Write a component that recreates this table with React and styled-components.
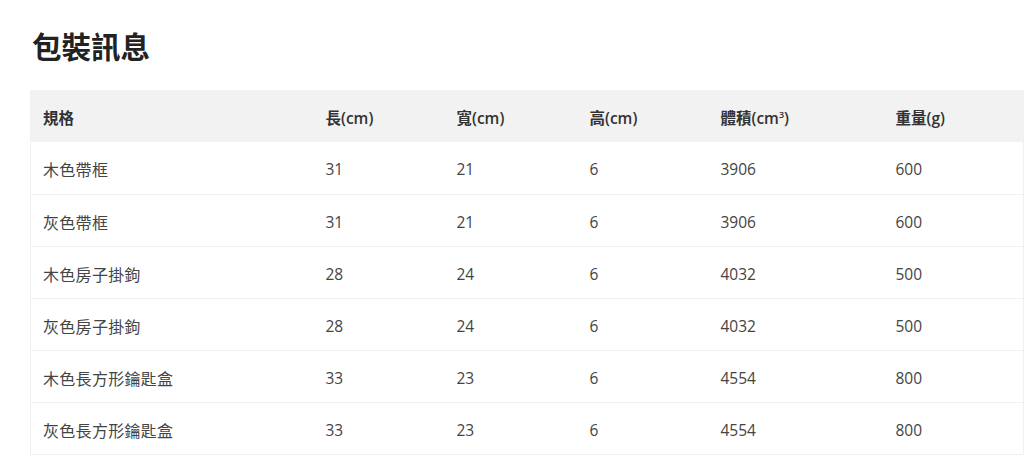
import React from "react";
import styled, { createGlobalStyle } from "styled-components";

const GlobalStyle = createGlobalStyle`
  body {
    margin: 0;
    background: #fff;
    font-family: "Open Sans", "Noto Sans CJK TC", sans-serif;
    color: #333;
  }
`;

const Section = styled.section`
  padding: 22px 1px 0 30px;
`;

const Title = styled.h2`
  margin: 0 0 22px 2px;
  font-family: "Noto Sans CJK TC", sans-serif;
  font-size: 29.5px;
  font-weight: 700;
  line-height: 46px;
  color: #222;
`;

const Table = styled.table`
  width: 100%;
  border-collapse: collapse;
  table-layout: fixed;
  border-left: 1px solid #f0f0f0;
  border-right: 1px solid #f0f0f0;
`;

const HeadCell = styled.th`
  height: 52px;
  padding: 3px 12px 0;
  text-align: left;
  background: #f2f2f2;
  font-family: "Open Sans", "Noto Sans CJK TC", sans-serif;
  font-size: 15.5px;
  font-weight: 600;
  color: #333;
  box-sizing: border-box;
`;

const Row = styled.tr`
  border-bottom: 1px solid #f0f0f0;
`;

const Cell = styled.td`
  height: 52px;
  padding: 3px 12px 0;
  font-size: 15.5px;
  color: #444;
  box-sizing: border-box;
`;

const NameCell = styled(Cell)`
  font-family: "Noto Sans CJK TC", sans-serif;
  font-size: 16px;
  font-weight: 400;
  letter-spacing: 0.3px;
`;

const Sup = styled.sup`
  font-size: 9px;
`;

const columns = [
  { label: "規格", width: 283 },
  { label: "長(cm)", width: 131 },
  { label: "寬(cm)", width: 133 },
  { label: "高(cm)", width: 131 },
  { label: <>體積(cm<Sup>3</Sup>)</>, width: 175 },
  { label: "重量(g)", width: 140 },
];

const rows = [
  ["木色帶框", 31, 21, 6, 3906, 600],
  ["灰色帶框", 31, 21, 6, 3906, 600],
  ["木色房子掛鉤", 28, 24, 6, 4032, 500],
  ["灰色房子掛鉤", 28, 24, 6, 4032, 500],
  ["木色長方形鑰匙盒", 33, 23, 6, 4554, 800],
  ["灰色長方形鑰匙盒", 33, 23, 6, 4554, 800],
];

export default function App() {
  return (
    <>
      <GlobalStyle />
      <Section>
        <Title>包裝訊息</Title>
        <Table>
          <colgroup>
            {columns.map((c, i) => (
              <col key={i} style={{ width: c.width }} />
            ))}
          </colgroup>
          <thead>
            <tr>
              {columns.map((c, i) => (
                <HeadCell key={i}>{c.label}</HeadCell>
              ))}
            </tr>
          </thead>
          <tbody>
            {rows.map(([name, ...values]) => (
              <Row key={name}>
                <NameCell>{name}</NameCell>
                {values.map((v, i) => (
                  <Cell key={i}>{v}</Cell>
                ))}
              </Row>
            ))}
          </tbody>
        </Table>
      </Section>
    </>
  );
}
